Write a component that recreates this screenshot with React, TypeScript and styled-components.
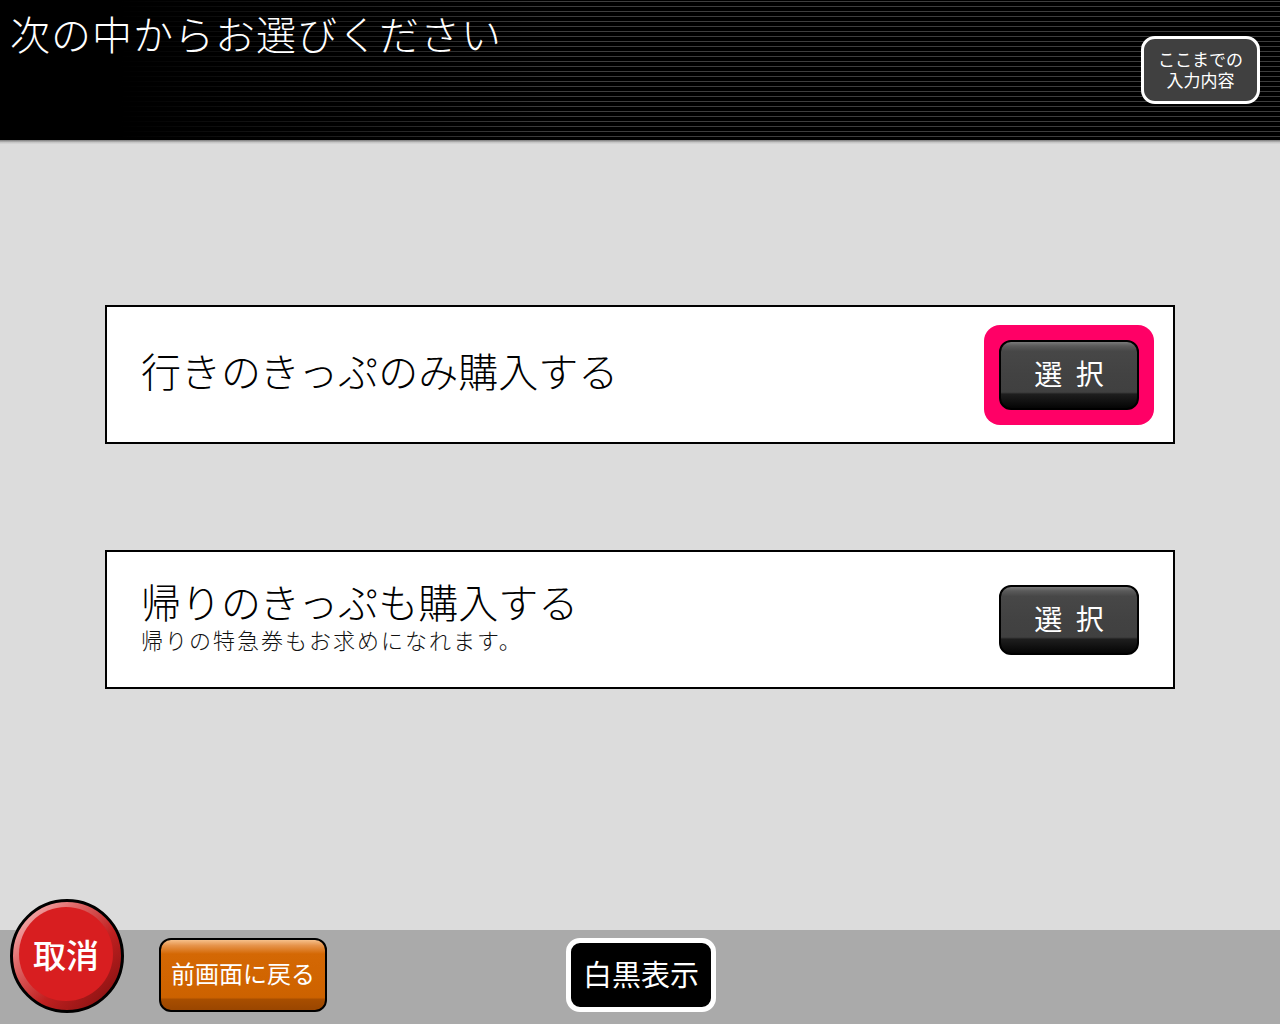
import React from "react"
import styled, { createGlobalStyle } from "styled-components"

const GlobalStyle = createGlobalStyle`
  html, body {
    margin: 0;
    padding: 0;
    background: #dcdcdc;
  }
  body {
    font-family: "Noto Sans CJK JP", "Noto Sans", sans-serif;
  }
`

const Page = styled.div`
  display: flex;
  flex-direction: column;
  width: 1280px;
  height: 1024px;
  overflow: hidden;
  background: #dcdcdc;
`

const Header = styled.header`
  display: flex;
  justify-content: space-between;
  align-items: flex-start;
  height: 140px;
  flex-shrink: 0;
  background:
    linear-gradient(to right, #000 0, #000 120px, rgba(0, 0, 0, 0.6) 300px, rgba(0, 0, 0, 0) 560px),
    repeating-linear-gradient(to bottom, #000 0, #000 1px, #3e3e3e 1px, #3e3e3e 2px, #000 2px, #000 5px);
  background-color: #000;
`

const HeaderEdge = styled.div`
  height: 4px;
  flex-shrink: 0;
  background: linear-gradient(to bottom, #7a7a7a, #c4c4c4 60%, #d8d8d8);
`

const Title = styled.h1`
  margin: 0;
  padding: 8px 0 0 10px;
  font-size: 40px;
  line-height: 50px;
  font-weight: 300;
  letter-spacing: 1px;
  color: #fff;
`

const HistoryButton = styled.button`
  display: flex;
  flex-direction: column;
  align-items: center;
  justify-content: center;
  width: 119px;
  height: 68px;
  margin: 36px 20px 0 0;
  padding: 0 0 2px;
  border: 3px solid #fff;
  border-radius: 14px;
  background: #404040;
  color: #fff;
  font-family: inherit;
  font-size: 17px;
  line-height: 21px;
`

const Main = styled.main`
  flex: 1;
  display: flex;
  flex-direction: column;
  align-items: center;
  gap: 106px;
  padding-top: 161px;
`

const Card = styled.div`
  display: flex;
  align-items: center;
  justify-content: space-between;
  box-sizing: border-box;
  width: 1070px;
  height: 139px;
  padding: 0 33px 0 34px;
  border: 2px solid #000;
  background: #fff;
`

const CardText = styled.div`
  display: flex;
  flex-direction: column;
  gap: 2px;
  padding-bottom: 9px;
  color: #000;
`

const CardTitle = styled.div`
  font-size: 40px;
  line-height: 46px;
  font-weight: 300;
`

const CardNote = styled.div`
  font-size: 22px;
  line-height: 26px;
  font-weight: 300;
  letter-spacing: 2px;
  color: #111;
`

const Focus = styled.div<{ $active?: boolean }>`
  display: flex;
  align-items: center;
  justify-content: center;
  width: 170px;
  height: 100px;
  margin-right: -14px;
  border-radius: 16px;
  background: ${(p) => (p.$active ? "#ff0066" : "transparent")};
`

const SelectButton = styled.button`
  box-sizing: border-box;
  width: 140px;
  height: 70px;
  padding: 0 0 4px;
  border: 2px solid #000;
  border-radius: 12px;
  background: linear-gradient(
    to bottom,
    #7a7a7a 0,
    #5a5a5a 6%,
    #474747 14%,
    #424242 50%,
    #404040 76%,
    #1e1e1e 79%,
    #050505 100%
  );
  color: #fff;
  font-family: inherit;
  font-size: 28px;
  line-height: 1;
  word-spacing: 7px;
`

const Footer = styled.footer`
  display: flex;
  align-items: flex-start;
  height: 94px;
  flex-shrink: 0;
  padding: 8px 0 0 10px;
  box-sizing: border-box;
  background: #aaaaaa;
`

const CancelButton = styled.button`
  display: flex;
  align-items: center;
  justify-content: center;
  box-sizing: border-box;
  width: 114px;
  height: 114px;
  margin-top: -39px;
  padding: 0;
  border: 3px solid #000;
  border-radius: 50%;
  background: linear-gradient(135deg, #ffd0d0 0, #e06a6a 30%, #c02020 60%, #7a0e0e 100%);
`

const CancelFace = styled.span`
  display: flex;
  align-items: center;
  justify-content: center;
  width: 94px;
  height: 94px;
  border-radius: 50%;
  background: #d81e20;
  color: #fff;
  font-family: "Noto Sans CJK JP", sans-serif;
  font-size: 33px;
  font-weight: 500;
  margin: 0 2px 4px 0;
`

const BackButton = styled.button`
  box-sizing: border-box;
  width: 168px;
  height: 74px;
  margin-left: 35px;
  padding: 0 0 4px;
  border: 2px solid #000;
  border-radius: 12px;
  background: linear-gradient(
    to bottom,
    #f6c08a 0,
    #e6934a 8%,
    #d46804 20%,
    #d06400 60%,
    #cc6200 82%,
    #a84e00 85%,
    #9a4600 100%
  );
  color: #fff;
  font-family: inherit;
  font-size: 24px;
  line-height: 1;
`

const MonoButton = styled.button`
  box-sizing: border-box;
  width: 150px;
  height: 74px;
  margin-left: 239px;
  padding: 0 0 4px;
  border: 5px solid #fff;
  border-radius: 14px;
  background: #000;
  color: #fff;
  font-family: inherit;
  font-size: 29px;
  line-height: 1;
`

const choices = [
  { title: "行きのきっぷのみ購入する", active: true },
  { title: "帰りのきっぷも購入する", note: "帰りの特急券もお求めになれます。" },
]

export default function App() {
  return (
    <Page>
      <GlobalStyle />
      <Header>
        <Title>次の中からお選びください</Title>
        <HistoryButton>
          <span>ここまでの</span>
          <span>入力内容</span>
        </HistoryButton>
      </Header>
      <HeaderEdge />
      <Main>
        {choices.map((c) => (
          <Card key={c.title}>
            <CardText>
              <CardTitle>{c.title}</CardTitle>
              {c.note && <CardNote>{c.note}</CardNote>}
            </CardText>
            <Focus $active={c.active}>
              <SelectButton>選 択</SelectButton>
            </Focus>
          </Card>
        ))}
      </Main>
      <Footer>
        <CancelButton>
          <CancelFace>取消</CancelFace>
        </CancelButton>
        <BackButton>前画面に戻る</BackButton>
        <MonoButton>白黒表示</MonoButton>
      </Footer>
    </Page>
  )
}
